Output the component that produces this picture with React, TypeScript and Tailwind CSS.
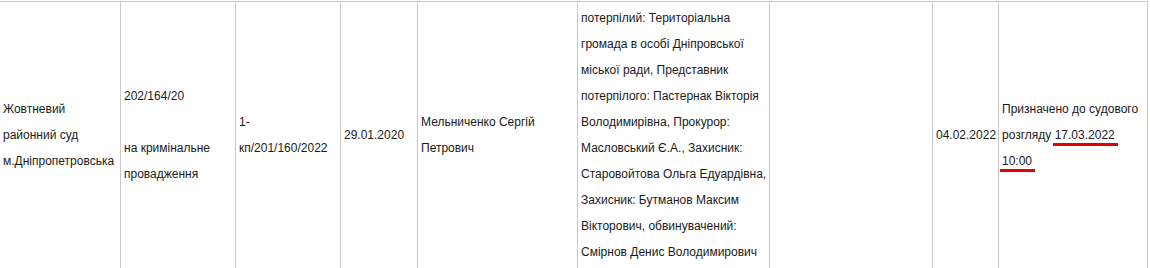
import React from "react";

const Mark = ({ children }: { children: React.ReactNode }) => (
  <span className="relative">
    {children}
    <span className="absolute left-[-2px] right-[-3px] top-[calc(100%+1px)] h-[3px] bg-[#e60000]" />
  </span>
);

const Cell = ({ w, children }: { w: string; children?: React.ReactNode }) => (
  <div className={`${w} flex shrink-0 items-center border-r border-[#c9c9c9] py-[3px] pl-[3px]`}>
    <div className="whitespace-nowrap">{children}</div>
  </div>
);

export default function App() {
  return (
    <div className="h-[268px] w-[1150px] overflow-hidden bg-white pt-px font-['Liberation_Sans',Arial,sans-serif] text-[12px] leading-[26px] text-[#1a1a1a]">
      <div className="flex w-[1148px] border-t border-[#c9c9c9]">
        <Cell w="w-[121px]">
          Жовтневий
          <br />
          районний суд
          <br />
          м.Дніпропетровська
        </Cell>
        <Cell w="w-[115px]">
          202/164/20
          <br />
          &nbsp;
          <br />
          на кримінальне
          <br />
          провадження
        </Cell>
        <Cell w="w-[105px]">
          1-
          <br />
          кп/201/160/2022
        </Cell>
        <Cell w="w-[77px]">29.01.2020</Cell>
        <Cell w="w-[160px]">
          Мельниченко Сергій
          <br />
          Петрович
        </Cell>
        <Cell w="w-[192px]">
          потерпілий: Територіальна
          <br />
          громада в особі Дніпровської
          <br />
          міської ради, Представник
          <br />
          потерпілого: Пастернак Вікторія
          <br />
          Володимирівна, Прокурор:
          <br />
          Масловський Є.А., Захисник:
          <br />
          Старовойтова Ольга Едуардівна,
          <br />
          Захисник: Бутманов Максим
          <br />
          Вікторович, обвинувачений:
          <br />
          Смірнов Денис Володимирович
        </Cell>
        <Cell w="w-[163px]" />
        <Cell w="w-[66px]">04.02.2022</Cell>
        <Cell w="w-[149px]">
          Призначено до судового
          <br />
          розгляду <Mark>17.03.2022</Mark>
          <br />
          <Mark>10:00</Mark>
        </Cell>
      </div>
    </div>
  );
}
